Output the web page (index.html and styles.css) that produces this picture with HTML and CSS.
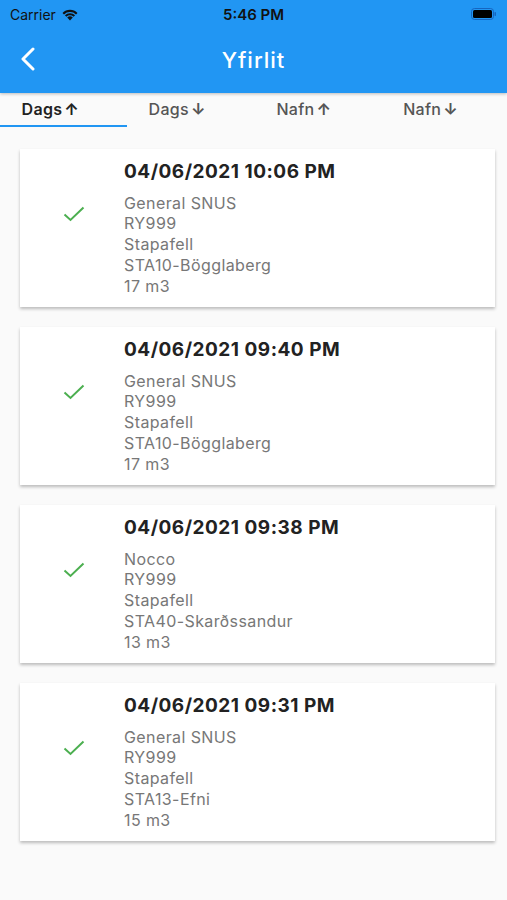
FILE: index.html
```html
<!DOCTYPE html>
<html lang="en">
<head>
    <meta charset="UTF-8">
    <meta name="viewport" content="width=device-width, initial-scale=1.0">
    <title>Yfirlit</title>
    <link rel="stylesheet" href="styles.css">
</head>
<body>
    <div class="top">
        <div class="status">
            <div class="carrier">Carrier
                <svg class="wifi" width="18" height="13" viewBox="0 0 18 13">
                    <path d="M9 12.5 L6.2 9.6 A4 4 0 0 1 11.8 9.6 Z" fill="#111"/>
                    <path d="M3.9 7.3 A7.3 7.3 0 0 1 14.1 7.3 L12.6 8.8 A5.2 5.2 0 0 0 5.4 8.8 Z" fill="#111"/>
                    <path d="M1.5 4.9 A10.6 10.6 0 0 1 16.5 4.9 L15 6.4 A8.5 8.5 0 0 0 3 6.4 Z" fill="#111"/>
                </svg>
            </div>
            <div class="clock">5:46 PM</div>
            <div class="battery">
                <svg width="26" height="12" viewBox="0 0 26 12">
                    <rect x="0.5" y="0.5" width="22" height="11" rx="3" fill="none" stroke="#1565c0" stroke-width="1"/>
                    <rect x="2" y="2" width="19" height="8" rx="1.5" fill="#000"/>
                    <rect x="23.5" y="4" width="1.5" height="4" rx="0.7" fill="#1565c0"/>
                </svg>
            </div>
        </div>
        <div class="appbar">
            <svg class="back" width="16" height="24" viewBox="0 0 16 24">
                <path d="M13 2 L3 12 L13 22" fill="none" stroke="#fff" stroke-width="3" stroke-linecap="round" stroke-linejoin="round"/>
            </svg>
            <h1>Yfirlit</h1>
        </div>
    </div>

    <div class="tabs">
        <div class="tab active">Dags <span class="arrow">&#8593;</span></div>
        <div class="tab">Dags <span class="arrow">&#8595;</span></div>
        <div class="tab">Nafn <span class="arrow">&#8593;</span></div>
        <div class="tab">Nafn <span class="arrow">&#8595;</span></div>
    </div>

    <div class="list">
        <div class="card">
            <div class="mark"><svg width="22" height="16" viewBox="0 0 22 16"><path d="M1.5 8.5 L7.5 14 L20.5 1.5" fill="none" stroke="#4caf50" stroke-width="2"/></svg></div>
            <div class="info">
                <div class="date">04/06/2021 10:06 PM</div>
                <div class="line">General SNUS</div>
                <div class="line">RY999</div>
                <div class="line">Stapafell</div>
                <div class="line">STA10-Bögglaberg</div>
                <div class="line">17 m3</div>
            </div>
        </div>
        <div class="card">
            <div class="mark"><svg width="22" height="16" viewBox="0 0 22 16"><path d="M1.5 8.5 L7.5 14 L20.5 1.5" fill="none" stroke="#4caf50" stroke-width="2"/></svg></div>
            <div class="info">
                <div class="date">04/06/2021 09:40 PM</div>
                <div class="line">General SNUS</div>
                <div class="line">RY999</div>
                <div class="line">Stapafell</div>
                <div class="line">STA10-Bögglaberg</div>
                <div class="line">17 m3</div>
            </div>
        </div>
        <div class="card">
            <div class="mark"><svg width="22" height="16" viewBox="0 0 22 16"><path d="M1.5 8.5 L7.5 14 L20.5 1.5" fill="none" stroke="#4caf50" stroke-width="2"/></svg></div>
            <div class="info">
                <div class="date">04/06/2021 09:38 PM</div>
                <div class="line">Nocco</div>
                <div class="line">RY999</div>
                <div class="line">Stapafell</div>
                <div class="line">STA40-Skarðssandur</div>
                <div class="line">13 m3</div>
            </div>
        </div>
        <div class="card">
            <div class="mark"><svg width="22" height="16" viewBox="0 0 22 16"><path d="M1.5 8.5 L7.5 14 L20.5 1.5" fill="none" stroke="#4caf50" stroke-width="2"/></svg></div>
            <div class="info">
                <div class="date">04/06/2021 09:31 PM</div>
                <div class="line">General SNUS</div>
                <div class="line">RY999</div>
                <div class="line">Stapafell</div>
                <div class="line">STA13-Efni</div>
                <div class="line">15 m3</div>
            </div>
        </div>
    </div>
</body>
</html>
```

FILE: styles.css
```css
body { margin: 0; background: #fafafa; font-family: Inter, Roboto, "Noto Sans", sans-serif; }
.top { background: #2196f3; box-shadow: 0 1px 3px rgba(0,0,0,0.25); position: relative; }
.status { height: 28px; display: flex; align-items: center; justify-content: space-between; padding: 0 10px; color: #111; }
.carrier { flex: 1; font-size: 14px; display: flex; align-items: center; gap: 5px; }
.clock { font-size: 15px; font-weight: 600; }
.battery { flex: 1; display: flex; justify-content: flex-end; }
.appbar { height: 65px; display: flex; align-items: center; position: relative; }
.back { margin-left: 20px; margin-top: -4px; }
.appbar h1 { position: absolute; left: 0; right: 0; top: 19px; margin: 0; text-align: center; color: #fff; font-size: 22px; font-weight: 500; letter-spacing: 1px; line-height: 26px; }
.tabs { display: flex; height: 34px; background: #fafafa; }
.tab { flex: 1; display: flex; align-items: center; justify-content: center; padding-right: 26px; font-size: 16px; font-weight: 500; letter-spacing: 0.3px; color: #555; border-bottom: 2px solid transparent; }
.tab.active { color: #222; font-weight: 600; border-bottom-color: #2196f3; }
.arrow { margin-left: 2px; font-weight: 700; }
.list { padding: 22px 12px 20px 20px; display: flex; flex-direction: column; gap: 20px; }
.card { background: #fff; height: 158px; display: flex; align-items: center; box-shadow: 0 2px 3px rgba(0,0,0,0.25); }
.mark { width: 104px; display: flex; justify-content: center; padding-left: 4px; box-sizing: border-box; margin-top: -28px; }
.info { display: flex; flex-direction: column; }
.date { font-size: 19px; font-weight: 700; letter-spacing: 0.5px; color: #222; margin-bottom: 10px; }
.line { font-size: 16px; line-height: 20.7px; letter-spacing: 0.4px; color: #777; }
```
